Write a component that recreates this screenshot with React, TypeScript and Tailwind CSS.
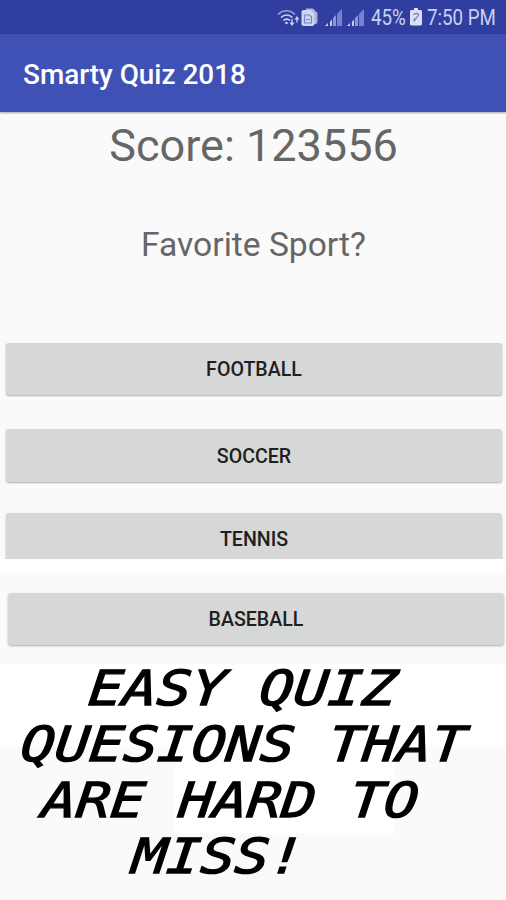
import React from 'react';

const SLOGAN = [
  { text: 'EASY QUIZ', indent: 'pl-[81px]' },
  { text: 'QUESIONS THAT', indent: 'pl-[19px]' },
  { text: 'ARE HARD TO', indent: 'pl-[46px]' },
  { text: 'MISS!', indent: 'pl-[142px]' },
];

const Signal: React.FC = () => (
  <svg width="18" height="18" viewBox="0 0 18 18">
    <path d="M17 0v17h-5V5z" fill="#7783c8" />
    <path d="M8 9l3-3v11H8z" fill="#8d98d1" />
    <path d="M5 12.500l2-2V17H5z" fill="#c5ccec" />
    <path d="M0 17l3-3v3z" fill="#c5ccec" />
  </svg>
);

const StatusBar: React.FC = () => (
  <div className="flex h-[34px] items-center bg-[#303f9f] pt-px pl-[277px] text-[#c9d0f0]">
    <svg width="23" height="20" viewBox="0 0 23 20" fill="none" stroke="currentColor" strokeWidth="1.7">
      <path d="M1 6.500C6 1.500 13 1.500 18 6.500" opacity=".7" />
      <path d="M4 9.500c3.500-3.300 8-3.300 11.500 0" />
      <path d="M6.500 12.500c2-1.800 4.500-1.800 6.500 0" />
      <circle cx="9.500" cy="15" r="1.300" fill="currentColor" stroke="none" />
      <path d="M15 11v5M20 14.500V11" strokeWidth="1.300" />
      <path d="M12.500 14.500h5L15 18zM17.500 11.500h5L20 8z" fill="currentColor" stroke="none" />
    </svg>
    <svg className="mb-[2px] ml-px" width="17" height="18" viewBox="0 0 17 18">
      <path d="M5 .5h7L16.500 5v9a2 2 0 0 1-2 2H5z" fill="#aab3df" />
      <path d="M2.500 2H10l3.500 3.500V16a2 2 0 0 1-2 2h-9a2 2 0 0 1-2-2V4a2 2 0 0 1 2-2z" fill="#d0d6f1" />
      <path d="M3.500 7h5l2 2v6h-7zM5 11.500h4" fill="none" stroke="#7784c8" strokeWidth="1.200" />
    </svg>
    <div className="ml-[7px] flex gap-[4px]">
      <Signal />
      <Signal />
    </div>
    <span className="mt-px ml-[6px] w-[34px] origin-left scale-x-[0.87] text-[21.500px] whitespace-nowrap">45%</span>
    <svg className="ml-[5px]" width="12" height="19" viewBox="0 0 12 19">
      <path d="M4 0h4v2h2.500A1.500 1.500 0 0 1 12 3.500V16a1.500 1.500 0 0 1-1.500 1.500h-9A1.500 1.500 0 0 1 0 16V3.500A1.500 1.500 0 0 1 1.500 2H4z" fill="#dce1f6" />
      <path d="M3.500 7c1-2 5-2 5 0s-2 1.500-2.500 3.500l-2 3 .5-3.500" fill="none" stroke="#7784c8" strokeWidth="1.300" />
    </svg>
    <span className="mt-px ml-[5px] origin-left scale-x-[0.87] text-[21.500px] whitespace-nowrap">7:50 PM</span>
  </div>
);

const answer =
  'flex w-[496px] items-center justify-center rounded-[3px] bg-[#d6d8d7] pt-[2px] text-[19.600px] font-medium text-[#202020] shadow-[0_1px_2px_rgba(0,0,0,0.3)]';

const App: React.FC = () => {
  return (
    <div className="h-[900px] w-[506px] overflow-hidden bg-[#fafafa] font-['Roboto',sans-serif]">
      <StatusBar />
      <header className="flex h-[78px] items-center bg-[#3f51b5] pt-[4px] pl-[23px] shadow-[0_1px_2px_rgba(0,0,0,0.35)]">
        <h1 className="text-[27.900px] font-medium whitespace-nowrap text-white">Smarty Quiz 2018</h1>
      </header>

      <main>
        <p className="pt-[7px] pl-px text-center text-[45px] leading-[54px] text-[#666]">Score: 123556</p>
        <p className="pt-[52px] pl-px text-center text-[33.600px] leading-[40px] text-[#666]">Favorite Sport?</p>

        <div className="mt-[78px] pl-[6px]">
          <button className={`${answer} h-[52px]`}>FOOTBALL</button>
          <button className={`${answer} mt-[34px] h-[53px]`}>SOCCER</button>
          <div className="-ml-[6px] mt-[26px] h-[51px] overflow-hidden pt-[5px] pl-[6px]">
            <button className={`${answer} h-[52px]`}>TENNIS</button>
          </div>
        </div>
        <div className="h-[13px] bg-white" />
        <div className="pt-[21px] pl-[8px]">
          <button className={`${answer} h-[52px]`}>BASEBALL</button>
        </div>

        <section className="relative mt-[19px] h-[236px]">
          <div className="h-[83px] bg-white" />
          <div className="ml-[175px] h-[86px] w-[220px] bg-white" />
          <div className="absolute -top-[4px] left-[11px] origin-top-left -skew-x-[5deg] scale-y-[0.85] font-['DejaVu_Sans_Mono',monospace] text-[56.800px] leading-[66px] whitespace-pre text-black italic [-webkit-text-stroke:1.5px_black]">
            {SLOGAN.map((line) => (
              <p key={line.text} className={line.indent}>{line.text}</p>
            ))}
          </div>
        </section>
      </main>
    </div>
  );
};

export default App;
